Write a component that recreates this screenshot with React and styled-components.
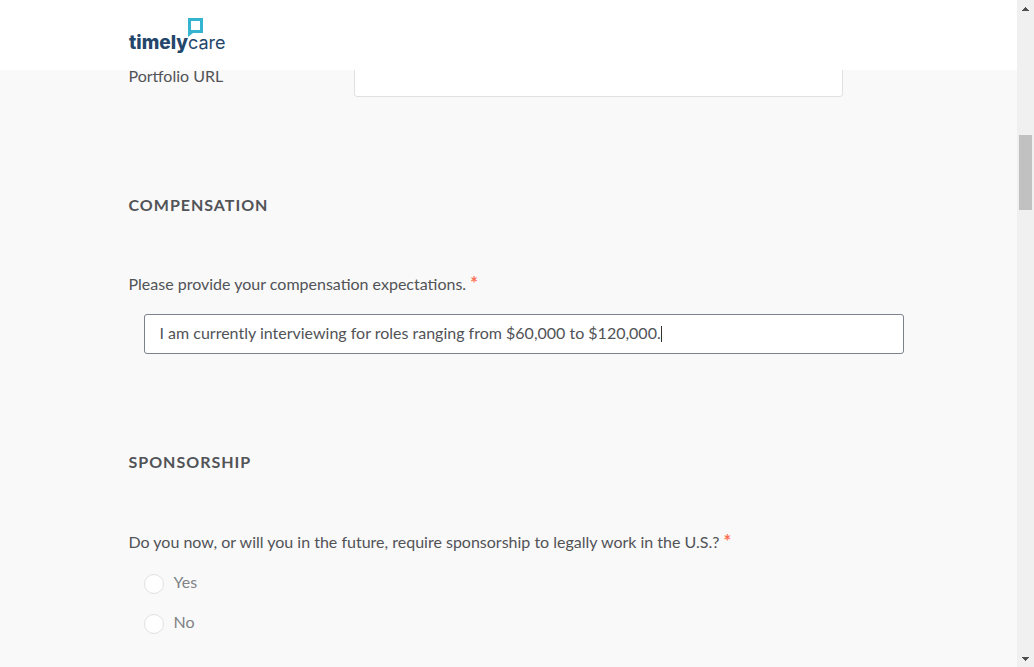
import React, { useState } from "react";
import styled, { createGlobalStyle } from "styled-components";

const GlobalStyle = createGlobalStyle`
  *, *::before, *::after { box-sizing: border-box; }
  html, body { margin: 0; background: #f9f9f9; }
  body {
    font-family: Lato, "Liberation Sans", sans-serif;
    font-size: 16px;
    line-height: 24px;
    color: #515357;
  }
`;

const Shell = styled.div`
  display: grid;
  grid-template-columns: minmax(0, 1fr) 17px;
  height: 100vh;
  overflow: hidden;
`;

const Page = styled.div`
  overflow: hidden;
`;

const Header = styled.header`
  position: relative;
  z-index: 1;
  height: 70px;
  padding-top: 18px;
  background: #ffffff;
`;

const Container = styled.div`
  width: 100%;
  max-width: 760px;
  margin: 0 auto;
`;

const LogoLink = styled.a`
  display: inline-block;
  color: #24466b;
  text-decoration: none;
`;

const LogoSvg = styled.svg`
  display: block;
  overflow: visible;
  font-family: Inter, "Liberation Sans", sans-serif;
  font-size: 19px;
`;

const Form = styled.form`
  margin-top: -13px;
`;

const FieldRow = styled.div`
  display: grid;
  grid-template-columns: 225px minmax(0, 489px);
  align-items: center;
`;

const FieldLabel = styled.label`
  padding-bottom: 2px;
`;

const Section = styled.section`
  margin-top: 96px;
`;

const SectionTitle = styled.h2`
  margin: 0 0 55px;
  font-size: 16px;
  line-height: 24px;
  font-weight: 700;
  letter-spacing: 1px;
  text-transform: uppercase;
`;

const Question = styled.label`
  display: block;
`;

const Required = styled.span`
  color: #ff7052;
  font-size: 18px;
  line-height: 1px;
  font-weight: 700;
`;

const TextInput = styled.input`
  display: block;
  width: 100%;
  height: 40px;
  padding: 0 15px 3px;
  border: 1px solid ${(p) => (p.$active ? "#7c828b" : "#e0e0e0")};
  border-radius: 3px;
  outline: none;
  background: #ffffff;
  color: inherit;
  font: inherit;
`;

const Answer = styled.div`
  position: relative;
  margin: 18px -15px 0 15px;
`;

const Caret = styled.span`
  position: absolute;
  left: 517px;
  top: 12px;
  width: 1px;
  height: 16px;
  background: #303236;
`;

const Choices = styled.fieldset`
  margin: 56px 0 0;
  padding: 0;
  border: 0;
`;

const Legend = styled.legend`
  padding: 0;
`;

const Options = styled.div`
  display: grid;
  gap: 20px;
  margin: 20px 0 0 15px;
`;

const Option = styled.label`
  display: flex;
  gap: 10px;
  height: 20px;
  line-height: 16px;
  color: #808286;
`;

const Radio = styled.input`
  appearance: none;
  flex: none;
  width: 20px;
  height: 20px;
  margin: 0;
  border: 1px solid #e0e0e0;
  border-radius: 50%;
  background: #ffffff;
  &:checked { border: 6px solid #24466b; }
`;

const Scrollbar = styled.div`
  display: flex;
  flex-direction: column;
  justify-content: space-between;
  background: #f0f0f0;
`;

const ScrollButton = styled.button`
  display: grid;
  place-items: center;
  flex: none;
  width: 17px;
  height: 17px;
  padding: 0;
  border: 0;
  background: transparent;
`;

const Track = styled.div`
  flex: 1;
  display: flex;
  flex-direction: column;
  align-items: center;
`;

const TrackBefore = styled.div`
  flex: 118 0 0;
`;

const Thumb = styled.div`
  flex: 75 0 0;
  width: 13px;
  background: #c1c1c1;
`;

const TrackAfter = styled.div`
  flex: 440 0 0;
`;

function Logo() {
  return (
    <LogoLink href="#" aria-label="timelycare">
      <LogoSvg width="96" height="36" viewBox="0 0 96 36">
        <path
          d="M59 0H74V15H64L59 19ZM62 3V12H71V3Z"
          fill="#35b4d1"
          fillRule="evenodd"
        />
        <text x="0" y="31" fill="currentColor">
          <tspan fontWeight="800">timely</tspan>
          <tspan fontWeight="400" fontSize="18">care</tspan>
        </text>
      </LogoSvg>
    </LogoLink>
  );
}

function Arrow({ down }) {
  return (
    <svg width="7" height="4" viewBox="0 0 7 4" shapeRendering="crispEdges">
      <path
        d={
          down
            ? "M0 0H7V1H6V2H5V3H4V4H3V3H2V2H1V1H0Z"
            : "M3 0H4V1H5V2H6V3H7V4H0V3H1V2H2V1H3Z"
        }
        fill="#505050"
      />
    </svg>
  );
}

export default function App() {
  const [portfolio, setPortfolio] = useState("");
  const [pay, setPay] = useState(
    "I am currently interviewing for roles ranging from $60,000 to $120,000."
  );

  return (
    <>
      <GlobalStyle />
      <Shell>
        <Page>
          <Header>
            <Container>
              <Logo />
            </Container>
          </Header>
          <Container as="main">
            <Form>
              <FieldRow>
                <FieldLabel htmlFor="portfolio">Portfolio URL</FieldLabel>
                <TextInput
                  id="portfolio"
                  value={portfolio}
                  onChange={(e) => setPortfolio(e.target.value)}
                />
              </FieldRow>
              <Section>
                <SectionTitle>Compensation</SectionTitle>
                <Question htmlFor="pay">
                  Please provide your compensation expectations.{" "}
                  <Required>*</Required>
                </Question>
                <Answer>
                  <TextInput
                    id="pay"
                    $active
                    value={pay}
                    onChange={(e) => setPay(e.target.value)}
                  />
                  <Caret />
                </Answer>
              </Section>
              <Section>
                <SectionTitle>Sponsorship</SectionTitle>
                <Choices>
                  <Legend>
                    Do you now, or will you in the future, require sponsorship
                    to legally work in the U.S.? <Required>*</Required>
                  </Legend>
                  <Options>
                    {["Yes", "No"].map((option) => (
                      <Option key={option}>
                        <Radio type="radio" name="sponsorship" value={option} />
                        {option}
                      </Option>
                    ))}
                  </Options>
                </Choices>
              </Section>
            </Form>
          </Container>
        </Page>
        <Scrollbar>
          <ScrollButton type="button" aria-label="Scroll up">
            <Arrow />
          </ScrollButton>
          <Track>
            <TrackBefore />
            <Thumb />
            <TrackAfter />
          </Track>
          <ScrollButton type="button" aria-label="Scroll down">
            <Arrow down />
          </ScrollButton>
        </Scrollbar>
      </Shell>
    </>
  );
}
